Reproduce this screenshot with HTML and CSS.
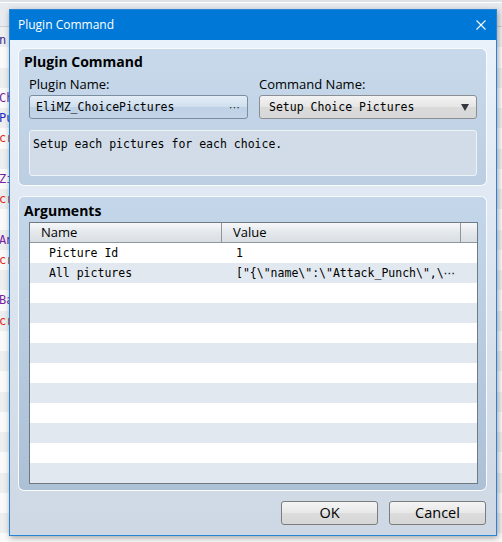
FILE: index.html
```html
<!DOCTYPE html>
<html>
<head>
<meta charset="utf-8">
<link rel="stylesheet" href="styles.css">
</head>
<body>
<div class="desktop">
  <div class="bg-top"></div>
  <div class="bg-list">
    <div class="bg-row bg-first"><span class="c-navy">n</span></div>
    <div class="bg-row"></div>
    <div class="bg-row"></div>
    <div class="bg-row"><span class="c-purple">Ch</span></div>
    <div class="bg-row"><span class="c-blue">Pu</span></div>
    <div class="bg-row"><span class="c-red">cr</span></div>
    <div class="bg-row"></div>
    <div class="bg-row"><span class="c-purple">Zi</span></div>
    <div class="bg-row"><span class="c-red">cr</span></div>
    <div class="bg-row"></div>
    <div class="bg-row"><span class="c-purple">An</span></div>
    <div class="bg-row"><span class="c-red">cr</span></div>
    <div class="bg-row"></div>
    <div class="bg-row"><span class="c-purple">Ba</span></div>
    <div class="bg-row"><span class="c-red">cr</span></div>
    <div class="bg-row"></div>
    <div class="bg-row"></div>
    <div class="bg-row"></div>
    <div class="bg-row"></div>
    <div class="bg-row"></div>
    <div class="bg-row"></div>
    <div class="bg-row"></div>
    <div class="bg-row"></div>
    <div class="bg-row"></div>
    <div class="bg-row"></div>
    <div class="bg-row"></div>
  </div>

  <div class="dialog">
    <div class="titlebar">
      <span class="title">Plugin Command</span>
      <svg class="close" width="10" height="10" viewBox="0 0 10 10">
        <path d="M0.5 0.5 L9.5 9.5 M9.5 0.5 L0.5 9.5" stroke="#ffffff" stroke-width="1.1" fill="none"/>
      </svg>
    </div>
    <div class="dlg-body">
      <section class="group group-cmd">
        <h2 class="group-title">Plugin Command</h2>
        <div class="field-grid">
          <div class="field">
            <div class="label">Plugin Name:</div>
            <div class="picker"><span class="mono">EliMZ_ChoicePictures</span><span class="dots">⋯</span></div>
          </div>
          <div class="field">
            <div class="label">Command Name:</div>
            <div class="combo"><span class="mono">Setup Choice Pictures</span><span class="arrow"></span></div>
          </div>
        </div>
        <div class="desc mono">Setup each pictures for each choice.</div>
      </section>

      <section class="group group-args">
        <h2 class="group-title">Arguments</h2>
        <div class="table">
          <div class="thead">
            <div class="th">Name</div>
            <div class="th">Value</div>
            <div class="th th-fill"></div>
          </div>
          <div class="tr"><div class="td td-name mono">Picture Id</div><div class="td td-value mono">1</div><div class="td"></div></div>
          <div class="tr"><div class="td td-name mono">All pictures</div><div class="td td-value mono">["{\"name\":\"Attack_Punch\",\<span class="elide">⋯</span></div><div class="td"></div></div>
          <div class="tr"></div>
          <div class="tr"></div>
          <div class="tr"></div>
          <div class="tr"></div>
          <div class="tr"></div>
          <div class="tr"></div>
          <div class="tr"></div>
          <div class="tr"></div>
          <div class="tr"></div>
          <div class="tr"></div>
        </div>
      </section>

      <div class="buttons">
        <button class="btn">OK</button>
        <button class="btn">Cancel</button>
      </div>
    </div>
  </div>
</div>
</body>
</html>
```

FILE: styles.css
```css
* { box-sizing: border-box; }

html, body {
  margin: 0;
  padding: 0;
}

body {
  width: 502px;
  height: 542px;
  overflow: hidden;
  font-family: "Open Sans", "Noto Sans", "DejaVu Sans", sans-serif;
  background: #ffffff;
}

.desktop {
  position: relative;
  width: 502px;
  height: 542px;
  overflow: hidden;
}

.bg-top {
  height: 27px;
  background: linear-gradient(#dde2e8 0, #dde2e8 2px, #ffffff 2px, #ffffff 3px, #e7eaee 3px);
  border-bottom: 1px solid #c9ced4;
}

.bg-list {
  display: flex;
  flex-direction: column;
}

.bg-row {
  height: 20.25px;
  line-height: 20px;
  font-family: "DejaVu Sans Mono", monospace;
  font-size: 12px;
  padding-left: 0;
  text-indent: -1px;
  white-space: nowrap;
  background: #eceef0;
}

.bg-first {
  line-height: 26px;
}

.bg-row:nth-child(even) {
  background: #fafafa;
}

.c-navy { color: #3b2a8c; }
.c-purple { color: #7a1fa2; }
.c-blue { color: #1d2bc4; }
.c-red { color: #e2231a; }

/* ---------- dialog window ---------- */
.dialog {
  position: absolute;
  left: 9px;
  top: 9px;
  width: 488px;
  height: 527px;
  border: 1px solid #2a84d6;
  display: flex;
  flex-direction: column;
  box-shadow: 1px 2px 6px rgba(0, 0, 0, 0.35);
  background: #cfdae6;
}

.titlebar {
  height: 30px;
  flex: none;
  background: #0078d7;
  display: flex;
  align-items: center;
  justify-content: space-between;
  padding: 0 10px 0 8px;
}

.title {
  color: #ffffff;
  font-size: 12px;
  line-height: 16px;
}

.close {
  display: block;
}

.dlg-body {
  flex: 1;
  background: linear-gradient(#e9f1fa, #cdd8e4);
  padding: 8px 9px 10px 8px;
  display: flex;
  flex-direction: column;
  gap: 10px;
}

.group {
  border: 1px solid rgba(255, 255, 255, 0.9);
  border-radius: 6px;
}

.group-cmd {
  height: 138px;
  padding: 4px 9px 9px 10px;
  background: linear-gradient(#c7d9eb, #bccee1);
}

.group-args {
  height: 295px;
  padding: 5px 8px 6px 10px;
  background: linear-gradient(#c4d7ea, #acc0d6);
}

.group-title {
  margin: 0 0 0 -5px;
  font-size: 14px;
  font-weight: 700;
  line-height: 18px;
  color: #000000;
}

.field-grid {
  display: grid;
  grid-template-columns: 219px 218px;
  column-gap: 11px;
  margin-top: 5px;
}

.label {
  font-size: 13px;
  line-height: 16px;
  color: #000000;
  margin-bottom: 3px;
}

.mono {
  font-family: "DejaVu Sans Mono", monospace;
  font-size: 11.5px;
}

.picker, .combo {
  height: 24px;
  border-radius: 3px;
  display: flex;
  align-items: center;
  justify-content: space-between;
  padding: 0 7px 0 6px;
  color: #000000;
}

.picker {
  border: 1px solid #7b8da1;
  background: linear-gradient(#e4edf7, #d0dfee 48%, #bfd1e5 52%, #c3d4e7);
}

.combo {
  border: 1px solid #8b8f94;
  background: linear-gradient(#f3f3f3, #e6e6e6 48%, #dadada 52%, #d8d8d8);
  padding-left: 9px;
  padding-right: 7px;
}

.dots {
  font-family: "DejaVu Sans", sans-serif;
  font-size: 11px;
  color: #1a1a1a;
}

.elide {
  font-family: "DejaVu Sans", sans-serif;
  font-size: 11.5px;
}

.arrow {
  width: 0;
  height: 0;
  border-left: 4px solid transparent;
  border-right: 4px solid transparent;
  border-top: 7px solid #333840;
}

.desc {
  margin-top: 11px;
  height: 46px;
  border: 1px solid #eef3f8;
  border-radius: 3px;
  background: #d1dce8;
  padding: 4px 3px;
  line-height: 18px;
  color: #000000;
}

/* ---------- table ---------- */
.table {
  margin-top: 2px;
  border: 1px solid #6f7984;
  background: #ffffff;
}

.thead, .tr {
  display: grid;
  grid-template-columns: 192px 239px 1fr;
  height: 20px;
}

.thead {
  background: linear-gradient(#f6f7f9, #e4e8ec 50%, #d9dee3);
  border-bottom: 1px solid #8e97a1;
}

.th {
  font-size: 13px;
  line-height: 19px;
  padding-left: 11px;
  color: #000000;
  border-right: 1px solid #8e97a1;
}

.th-fill {
  border-right: none;
}

.tr:nth-child(odd) {
  background: #e1e8ef;
}

.td {
  line-height: 20px;
  white-space: nowrap;
  overflow: hidden;
  color: #000000;
}

.td-name {
  padding-left: 19px;
}

.td-value {
  padding-left: 14px;
}

/* ---------- buttons ---------- */
.buttons {
  display: flex;
  justify-content: flex-end;
  gap: 11px;
  padding-right: 1px;
}

.btn {
  width: 97px;
  height: 24px;
  border: 1px solid #7c7c7c;
  border-radius: 3px;
  background: linear-gradient(#f4f4f4, #e8e8e8 48%, #dcdcdc 52%, #d6d6d6);
  font-family: "Open Sans", "Noto Sans", sans-serif;
  font-size: 14.5px;
  color: #000000;
  padding: 0;
  line-height: 20px;
}
```
